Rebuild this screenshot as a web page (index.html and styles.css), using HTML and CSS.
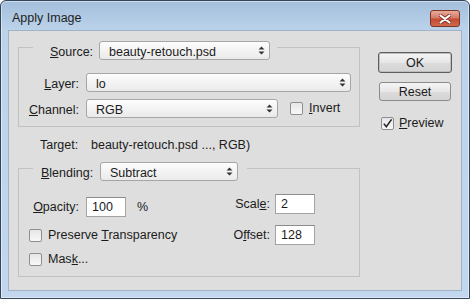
FILE: index.html
```html
<!DOCTYPE html>
<html lang="en">
<head>
    <meta charset="UTF-8">
    <title>Apply Image</title>
    <link rel="stylesheet" href="styles.css">
</head>
<body>
    <div class="window">
        <div class="titlebar">
            <span class="title">Apply Image</span>
            <div class="close">
                <svg width="12" height="10" viewBox="0 0 12 10">
                    <path d="M1.5 1.5 L10.5 8.5 M10.5 1.5 L1.5 8.5" stroke="#7a2e20" stroke-width="3.6" stroke-linecap="round"/>
                    <path d="M1.5 1.5 L10.5 8.5 M10.5 1.5 L1.5 8.5" stroke="#fff" stroke-width="2.2" stroke-linecap="round"/>
                </svg>
            </div>
        </div>

        <div class="client">
            <div class="main">
                <!-- Source group -->
                <div class="group group-source">
                    <div class="legend legend-source">
                        <span class="legend-label"><u>S</u>ource:</span>
                        <div class="select select-source">
                            <span>beauty-retouch.psd</span>
                            <svg class="arrows" width="7" height="9" viewBox="0 0 7 9"><path d="M0.5 3.5 L3.5 0.5 L6.5 3.5 Z M0.5 5.5 L3.5 8.5 L6.5 5.5 Z" fill="#333"/></svg>
                        </div>
                    </div>
                    <div class="row row-layer">
                        <span class="label"><u>L</u>ayer:</span>
                        <div class="select select-layer">
                            <span>lo</span>
                            <svg class="arrows" width="7" height="9" viewBox="0 0 7 9"><path d="M0.5 3.5 L3.5 0.5 L6.5 3.5 Z M0.5 5.5 L3.5 8.5 L6.5 5.5 Z" fill="#333"/></svg>
                        </div>
                    </div>
                    <div class="row row-channel">
                        <span class="label"><u>C</u>hannel:</span>
                        <div class="select select-channel">
                            <span>RGB</span>
                            <svg class="arrows" width="7" height="9" viewBox="0 0 7 9"><path d="M0.5 3.5 L3.5 0.5 L6.5 3.5 Z M0.5 5.5 L3.5 8.5 L6.5 5.5 Z" fill="#333"/></svg>
                        </div>
                        <span class="check check-invert"></span>
                        <span class="check-label"><u>I</u>nvert</span>
                    </div>
                </div>

                <div class="target">
                    <span class="target-label">Target:</span>
                    <span>beauty-retouch.psd ..., RGB)</span>
                </div>

                <!-- Blending group -->
                <div class="group group-blend">
                    <div class="legend legend-blend">
                        <span class="legend-label"><u>B</u>lending:</span>
                        <div class="select select-blend">
                            <span>Subtract</span>
                            <svg class="arrows" width="7" height="9" viewBox="0 0 7 9"><path d="M0.5 3.5 L3.5 0.5 L6.5 3.5 Z M0.5 5.5 L3.5 8.5 L6.5 5.5 Z" fill="#333"/></svg>
                        </div>
                    </div>
                    <div class="blend-body">
                        <div class="blend-left">
                            <div class="row row-opacity">
                                <span class="label"><u>O</u>pacity:</span>
                                <div class="field">100</div>
                                <span class="unit">%</span>
                            </div>
                            <div class="row row-preserve">
                                <span class="check"></span>
                                <span class="check-label">Preserve <u>T</u>ransparency</span>
                            </div>
                            <div class="row row-mask">
                                <span class="check"></span>
                                <span class="check-label">Mas<u>k</u>...</span>
                            </div>
                        </div>
                        <div class="blend-right">
                            <div class="row row-scale">
                                <span class="label-sm">Scal<u>e</u>:</span>
                                <div class="field">2</div>
                            </div>
                            <div class="row row-offset">
                                <span class="label-sm">O<u>f</u>fset:</span>
                                <div class="field">128</div>
                            </div>
                        </div>
                    </div>
                </div>
            </div>

            <div class="side">
                <div class="btn btn-default">OK</div>
                <div class="btn btn-reset">Reset</div>
                <div class="row row-preview">
                    <span class="check">
                        <svg width="11" height="11" viewBox="0 0 11 11"><path d="M1.8 5.6 L4.3 8.8 L9.6 1.4" fill="none" stroke="#222" stroke-width="1.5"/></svg>
                    </span>
                    <span class="check-label"><u>P</u>review</span>
                </div>
            </div>
        </div>
    </div>
</body>
</html>
```

FILE: styles.css
```css
* {
    box-sizing: border-box;
}
body {
    margin: 0;
    font-family: "Liberation Sans", Arial, sans-serif;
    font-size: 12.5px;
    line-height: 14px;
    color: #1b1b1b;
    background: #fff;
}
u {
    text-underline-offset: 1px;
}
.window {
    width: 470px;
    height: 299px;
    border: 1px solid #34465a;
    border-radius: 6px 6px 0 0;
    background: linear-gradient(#a3bfdc, #bcd3ea 30px, #c2d7ed);
    box-shadow: inset 0 0 0 1px rgba(255,255,255,0.45);
    display: flex;
    flex-direction: column;
}
.titlebar {
    height: 29px;
    display: flex;
    justify-content: space-between;
    align-items: flex-start;
    padding: 9px 9px 0 11px;
}
.title {
    margin-top: 1px;
    line-height: 15px;
    color: #1e1e1e;
}
.close {
    width: 30px;
    height: 17px;
    border: 1px solid #7d3626;
    border-radius: 3px;
    background: linear-gradient(#e9ab9b, #d57b66 45%, #c44b31 55%, #d06a4d);
    display: flex;
    align-items: center;
    justify-content: center;
}
.client {
    margin: 0 7px;
    height: 261px;
    border: 1px solid #9fb3c8;
    background: #dedede;
    display: flex;
    padding: 16px 0 0 9px;
}
.main {
    width: 342px;
    display: flex;
    flex-direction: column;
}
.group {
    width: 342px;
    border: 1px solid #c2c2c2;
}
.group-source {
    height: 80px;
}
.group-blend {
    height: 109px;
    margin-top: 15px;
}
.legend {
    display: flex;
    align-items: center;
    width: max-content;
    height: 19px;
    margin: -7px 0 0 14px;
    background: #dedede;
}
.legend-source {
    padding: 0 7px 0 17px;
}
.legend-blend {
    padding: 0 9px 0 8px;
}
.legend-source .legend-label {
    width: 49px;
}
.legend-blend .legend-label {
    width: 59px;
}
.select {
    height: 19px;
    border: 1px solid #a6a6a6;
    border-radius: 3px;
    background: linear-gradient(#fdfdfd, #eaeaea);
    display: flex;
    align-items: center;
    justify-content: space-between;
    padding: 0 4px 0 9px;
}
.arrows {
    flex: none;
}
.select-source { width: 171px; }
.select-layer { width: 265px; }
.select-channel { width: 192px; }
.select-blend { width: 138px; }

.group-source .label,
.group-source .legend-label,
.group-source .select span {
    padding-top: 3px;
}
.group-blend .legend-label,
.group-blend .select span {
    padding-top: 2px;
}
.row {
    display: flex;
    align-items: center;
}
.label {
    width: 60px;
    text-align: right;
    margin-right: 7px;
}
.row-layer {
    margin-top: 13px;
}
.row-channel {
    margin-top: 7px;
}
.check {
    width: 13px;
    height: 13px;
    flex: none;
    border: 1px solid #8e8e8e;
    border-radius: 2px;
    background: linear-gradient(#e6e6e6, #f8f8f8);
    display: flex;
    align-items: center;
    justify-content: center;
}
.check-invert {
    margin-left: 12px;
}
.check-label {
    margin-left: 6px;
    line-height: 13px;
}
.target {
    margin-top: 11px;
    padding-left: 22px;
    line-height: 15px;
    display: flex;
}
.target-label {
    width: 51px;
}
.blend-body {
    display: flex;
}
.blend-left {
    width: 201px;
    padding-top: 16px;
}
.blend-right {
    padding-top: 13px;
}
.field {
    width: 40px;
    height: 20px;
    border: 1px solid #a3a3a3;
    border-top-color: #8c8c8c;
    background: #fff;
    padding-left: 5px;
    line-height: 18px;
}
.unit {
    margin-left: 11px;
}
.row-preserve {
    margin-top: 12px;
    padding-left: 10px;
}
.row-mask {
    margin-top: 11px;
    padding-left: 10px;
}
.label-sm {
    width: 50px;
    text-align: right;
    margin-right: 5px;
}
.row-offset {
    margin-top: 11px;
}
.side {
    margin-left: 18px;
    padding-top: 5px;
}
.btn {
    width: 73px;
    height: 20px;
    border: 1px solid #8b8b8b;
    border-radius: 3px;
    background: linear-gradient(#f5f5f5, #e7e7e7 50%, #dcdcdc 51%, #d4d4d4);
    display: flex;
    align-items: center;
    justify-content: center;
}
.btn-default {
    width: 74px;
    height: 21px;
    border-color: #5e5e5e;
    box-shadow: inset 0 0 0 1px #bdbdbd;
}
.btn-reset {
    width: 72px;
    height: 19px;
    margin: 9px 0 0 1px;
}
.row-preview {
    margin: 16px 0 0 3px;
}
.row-preview .check-label {
    margin-left: 5px;
}
```
